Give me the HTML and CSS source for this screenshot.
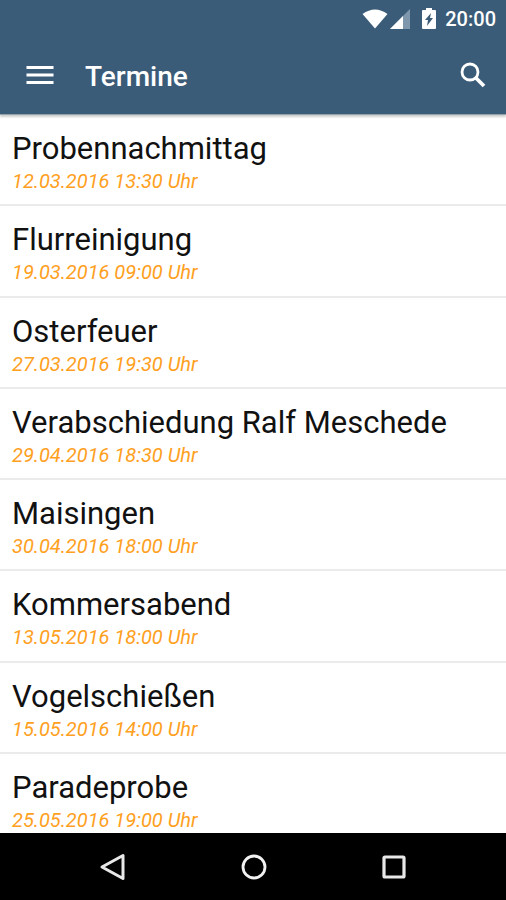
FILE: index.html
```html
<!DOCTYPE html>
<html lang="de">
<head>
  <meta charset="UTF-8">
  <meta name="viewport" content="width=device-width, initial-scale=1.0">
  <title>Termine</title>
  <link rel="stylesheet" href="styles.css">
</head>
<body>

  <header class="header">
    <div class="statusbar">
      <svg class="wifi" width="26" height="20" viewBox="0 0 26 20"><path d="M0.5 5 Q13 -4 25.500 5 L13 19.500 Z" fill="#fff"/></svg>
      <svg class="signal" width="20" height="20" viewBox="0 0 20 20"><path d="M20 0 V20 H0 Z" fill="#7f97ac"/><path d="M13 7 V20 H0 Z" fill="#fff"/></svg>
      <svg class="battery" width="14" height="22" viewBox="0 0 14 22"><path d="M4 0 H10 V2 H13 Q14 2 14 3 V20 Q14 21 13 21 H1 Q0 21 0 20 V3 Q0 2 1 2 H4 Z" fill="#fff"/><path d="M9 5 L3 12 H6 L5 18 L11 10 H8 Z" fill="#3b5c78"/></svg>
      <span class="clock">20:00</span>
    </div>
    <div class="toolbar">
      <button class="icon-button" aria-label="Menü">
        <svg width="28" height="20" viewBox="0 0 28 20"><path d="M0.500 2.500 H27.500 M0.500 10 H27.500 M0.500 17.500 H27.500" stroke="#fff" stroke-width="3"/></svg>
      </button>
      <h1>Termine</h1>
      <button class="icon-button" aria-label="Suchen">
        <svg width="26" height="26" viewBox="0 0 26 26" fill="none" stroke="#fff"><circle cx="10" cy="10" r="8" stroke-width="2.800"/><path d="M16 16 L24 24" stroke-width="3.800"/></svg>
      </button>
    </div>
  </header>

  <ul class="list">
    <li class="item"><h2>Probennachmittag</h2><p>12.03.2016 13:30 Uhr</p></li>
    <li class="item"><h2>Flurreinigung</h2><p>19.03.2016 09:00 Uhr</p></li>
    <li class="item"><h2>Osterfeuer</h2><p>27.03.2016 19:30 Uhr</p></li>
    <li class="item"><h2>Verabschiedung Ralf Meschede</h2><p>29.04.2016 18:30 Uhr</p></li>
    <li class="item"><h2>Maisingen</h2><p>30.04.2016 18:00 Uhr</p></li>
    <li class="item"><h2>Kommersabend</h2><p>13.05.2016 18:00 Uhr</p></li>
    <li class="item"><h2>Vogelschießen</h2><p>15.05.2016 14:00 Uhr</p></li>
    <li class="item"><h2>Paradeprobe</h2><p>25.05.2016 19:00 Uhr</p></li>
  </ul>

  <nav class="navbar">
    <button class="icon-button" aria-label="Zurück">
      <svg width="28" height="28" viewBox="0 0 28 28"><path d="M24 2.500 V25.500 L3 14 Z" fill="none" stroke="#e8e8e8" stroke-width="3" stroke-linejoin="round"/></svg>
    </button>
    <button class="icon-button" aria-label="Startseite">
      <svg width="28" height="28" viewBox="0 0 28 28"><circle cx="14" cy="14" r="11" fill="none" stroke="#f2f2f2" stroke-width="2.800"/></svg>
    </button>
    <button class="icon-button" aria-label="Übersicht">
      <svg width="28" height="28" viewBox="0 0 28 28"><rect x="4" y="4" width="20" height="20" rx="1" fill="none" stroke="#e8e8e8" stroke-width="3.200"/></svg>
    </button>
  </nav>

</body>
</html>
```
FILE: styles.css
```css
* {
  box-sizing: border-box;
}

body {
  font-family: Roboto, sans-serif;
  background-color: #fff;
  margin: 0;
  display: flex;
  flex-direction: column;
  height: 100vh;
}

h1, h2, p, ul {
  margin: 0;
  padding: 0;
}

svg {
  display: block;
}

.header {
  background-color: #3b5c78;
  color: #fff;
  border-bottom: 1px solid #95a1ac;
  box-shadow: 0 2px 2px rgba(0, 0, 0, 0.2);
  z-index: 1;
}

.statusbar {
  display: flex;
  justify-content: flex-end;
  align-items: center;
  height: 38px;
  padding-right: 10px;
}

.signal {
  margin-left: 2px;
}

.battery {
  margin-left: 12px;
}

.clock {
  font-size: 20px;
  font-weight: 500;
  line-height: 24px;
  margin-left: 9px;
}

.toolbar {
  display: flex;
  align-items: center;
  height: 76px;
  padding: 0 20px 2px 26px;
}

.toolbar h1 {
  flex: 1;
  font-size: 28px;
  font-weight: 500;
  line-height: 32px;
  margin-left: 31px;
  padding-top: 3px;
}

.icon-button {
  background: none;
  border: none;
  padding: 0;
  cursor: pointer;
}

.list {
  flex: 1;
  display: flex;
  flex-direction: column;
  overflow: hidden;
  list-style: none;
}

.item {
  flex: 1 0 auto;
  padding: 16px 12px 10px;
  border-bottom: 2px solid #ebebeb;
}

.item:last-child {
  padding-bottom: 0;
  border-bottom: none;
}

.item h2 {
  color: #111;
  font-size: 31px;
  font-weight: 400;
  line-height: 36px;
}

.item p {
  color: #ffa01e;
  font-size: 20px;
  font-style: italic;
  line-height: 24px;
  margin-top: 2px;
}

.navbar {
  display: flex;
  justify-content: space-between;
  align-items: center;
  background-color: #000;
  height: 67px;
  padding: 0 98px 0 99px;
}
```
